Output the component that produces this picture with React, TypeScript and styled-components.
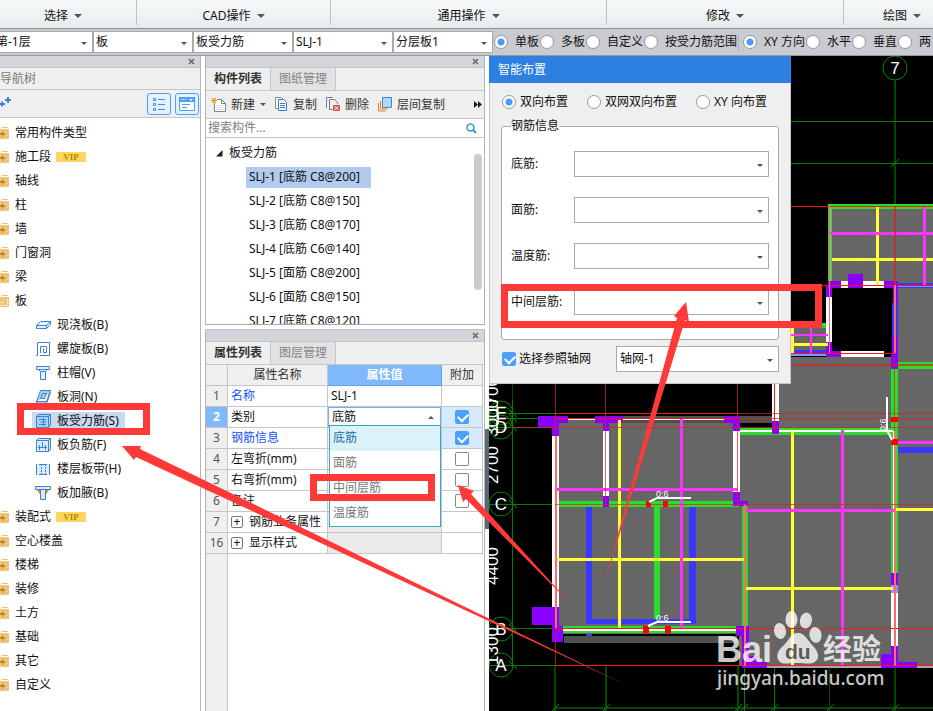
import React, { useState } from 'react';
import styled, { createGlobalStyle, css } from 'styled-components';

const GlobalStyle = createGlobalStyle`
  * { box-sizing: border-box; }
  body {
    margin: 0;
    background: #fff;
    color: #111;
    font: 12px/16px "Noto Sans", "Noto Sans CJK SC", sans-serif;
  }
  button, input, select { font: inherit; color: inherit; margin: 0; }
  button { background: none; border: 0; padding: 0; }
`;

/* ---------- shared controls ---------- */

const Page = styled.div`
  position: relative;
  display: flex;
  flex-direction: column;
  height: 100vh;
  overflow: hidden;
`;

const Caret = styled.span<{ $up?: boolean }>`
  width: 0;
  height: 0;
  border-left: 3px solid transparent;
  border-right: 3px solid transparent;
  ${(p) => (p.$up ? 'border-bottom: 3px solid #555;' : 'border-top: 3px solid #555;')}
`;

const SelectBox = styled.span`
  position: relative;
  display: flex;
  height: 26px;
  &::after {
    content: '';
    position: absolute;
    right: 6px;
    top: 50%;
    border: 3px solid transparent;
    border-top-color: #555;
    border-bottom-width: 0;
    pointer-events: none;
  }
  select {
    width: 100%;
    appearance: none;
    border: 1px solid #aaa;
    border-radius: 0;
    background: #fff;
    padding: 0 16px 0 3px;
  }
`;

const RadioLabel = styled.label<{ $gap: number }>`
  display: flex;
  align-items: center;
  gap: ${(p) => p.$gap}px;
  white-space: nowrap;
  flex: none;
`;

const Radio = styled.input.attrs({ type: 'radio' })`
  appearance: none;
  flex: none;
  width: 14px;
  height: 14px;
  border: 1px solid #999;
  border-radius: 50%;
  background: #fff;
  &:checked { background: radial-gradient(circle, #4a9cf8 0 3px, #fff 4px); }
`;

const CheckInput = styled.input.attrs({ type: 'checkbox' })`
  appearance: none;
  flex: none;
  display: block;
  width: 14px;
  height: 14px;
  border: 1px solid #888;
  border-radius: 2px;
  background: #fff;
  &:checked {
    border-color: #4c9ffb;
    background: #4c9ffb;
  }
  &:checked::after {
    content: '';
    display: block;
    width: 8px;
    height: 5px;
    margin: 2px;
    border: solid #fff;
    border-width: 0 0 2px 2px;
    transform: rotate(-45deg);
  }
`;

/* ---------- ribbon ---------- */

const Ribbon = styled.nav`
  flex: none;
  display: grid;
  grid-template-columns: 137fr 194fr 276fr 237fr 89fr;
  height: 29px;
  background: linear-gradient(#f7f9f9, #e6eced);
  border-bottom: 1px solid #8f9296;
`;

const RibbonGroup = styled.div`
  display: flex;
  align-items: center;
  justify-content: center;
  padding-top: 6px;
  margin-bottom: 3px;
  border-right: 1px solid #bfc2c4;
  &:first-child { padding-right: 10px; }
  &:last-child { border: 0; justify-content: flex-start; padding-left: 39px; }
  button {
    display: flex;
    align-items: center;
    gap: 6px;
    white-space: nowrap;
  }
  ${Caret} { border-left-width: 4px; border-right-width: 4px; border-top-width: 4px; }
`;

const OptionBar = styled.div`
  flex: none;
  display: flex;
  align-items: center;
  height: 27px;
  overflow: hidden;
  background: #cacbd1;
  border-bottom: 1px solid #96989c;
  ${SelectBox} { flex: none; width: 100px; height: 22px; }
  ${SelectBox} select { padding-left: 2px; }
  ${SelectBox}:first-child { width: 93px; }
  ${SelectBox}:first-child select { padding-left: 0; text-indent: -4px; border-left: 0; }
`;

const RadioSet = styled.div`
  display: flex;
  gap: 1px;
  padding: 0 1px 0 1px;
  height: 17px;
  & + & { border-left: 1px solid #b0b2b6; padding-left: 4px; }
`;

/* ---------- workspace ---------- */

const Workspace = styled.main`
  flex: 1;
  min-height: 0;
  display: grid;
  grid-template-columns: 201px 280px 1fr;
  column-gap: 4px;
`;

const Panel = styled.section`
  display: flex;
  flex-direction: column;
  min-height: 0;
  border-right: 1px solid #b4b5ba;
  background: #fff;
`;

const PanelStrip = styled.div`
  flex: none;
  display: flex;
  align-items: center;
  justify-content: flex-end;
  height: 12px;
  padding-right: 5px;
  background: #d4d5db;
  border-bottom: 1px solid #c2c3c8;
  button { display: flex; }
`;

const PanelTitle = styled.h2`
  flex: none;
  margin: 0;
  height: 22px;
  padding: 3px 0;
  font-size: 12px;
  line-height: 16px;
  font-weight: 400;
  color: #7a7a7a;
  background: #efefef;
  border-bottom: 1px solid #c6c6c6;
`;

const NavTools = styled.div`
  flex: none;
  display: flex;
  align-items: center;
  gap: 4px;
  height: 28px;
  padding-right: 1px;
  background: #efefef;
  border-bottom: 1px solid #c6c6c6;
  & > :first-child { margin-right: auto; }
`;

const ToggleButton = styled.button`
  display: flex;
  align-items: center;
  justify-content: center;
  width: 24px;
  height: 22px;
  border: 1px solid #4c9ffb;
  border-radius: 3px;
  background: #e5f1fe;
`;

const List = styled.ul`
  list-style: none;
  margin: 0;
  padding: 3px 0 0;
`;

const NavItem = styled.li`
  display: flex;
  align-items: center;
  height: 24px;
  gap: 5px;
  button { display: flex; align-items: center; gap: 6px; white-space: nowrap; }
`;

const NavChild = styled.li<{ $active?: boolean }>`
  display: flex;
  align-items: center;
  height: 24px;
  padding-left: 32px;
  button {
    display: flex;
    align-items: center;
    gap: 6px;
    height: 18px;
    padding: 0 6px 0 3px;
    white-space: nowrap;
    background: ${(p) => (p.$active ? '#c8d9f0' : 'transparent')};
  }
`;

const Vip = styled.span`
  width: 30px;
  height: 10px;
  background: #ffd65c;
  color: #b8860b;
  font: bold 9px/10px "Liberation Serif", serif;
  text-align: center;
`;

const Middle = styled.div`
  display: flex;
  flex-direction: column;
  gap: 4px;
  min-height: 0;
  ${Panel} { border-left: 1px solid #b4b5ba; }
`;

const ComponentPanel = styled(Panel)`
  flex: 0 0 269px;
  border-bottom: 1px solid #aaa;
`;

const PropertyPanel = styled(Panel)`
  flex: 1;
  border-top: 1px solid #c2c3c8;
`;

const Tabs = styled.div`
  flex: none;
  display: flex;
  height: 23px;
  background: #efefef;
  border-bottom: 1px solid #c6c6c6;
`;

const Tab = styled.button<{ $active?: boolean }>`
  width: 65px;
  color: #858585;
  background: #e2e2e2;
  border-right: 1px solid #c6c6c6;
  ${(p) => p.$active && css`
    color: #333;
    font-weight: 700;
    background: #efefef;
  `}
`;

const Tools = styled.div`
  flex: none;
  display: flex;
  align-items: center;
  height: 28px;
  padding: 0 2px 0 5px;
  background: #efefef;
  border-bottom: 1px solid #c6c6c6;
  color: #333;
  gap: 9px;
  button { display: flex; align-items: center; gap: 5px; white-space: nowrap; }
  & > :last-child { margin-left: auto; }
`;

const Search = styled.label`
  flex: none;
  display: flex;
  align-items: center;
  height: 19px;
  padding-right: 7px;
  border-bottom: 1px solid #c6c6c6;
  input {
    flex: 1;
    min-width: 0;
    border: 0;
    padding: 0 2px;
    outline: 0;
  }
  input::placeholder { color: #808080; opacity: 1; }
`;

const ComponentTree = styled.div`
  position: relative;
  flex: 1;
  min-height: 0;
  overflow: hidden;
`;

const TreeRoot = styled.button`
  display: flex;
  align-items: center;
  gap: 6px;
  height: 24px;
  padding-left: 10px;
`;

const TreeItem = styled.li<{ $active?: boolean }>`
  display: flex;
  align-items: center;
  height: 24px;
  padding-left: 40px;
  button {
    height: 21px;
    min-width: 125px;
    padding: 0 3px;
    text-align: left;
    white-space: nowrap;
    background: ${(p) => (p.$active ? '#b1cbee' : 'transparent')};
  }
`;

const ScrollThumb = styled.div`
  position: absolute;
  top: 16px;
  right: 2px;
  width: 8px;
  height: 136px;
  border-radius: 4px;
  background: #ccc;
`;

/* ---------- property table ---------- */

const TableArea = styled.div`
  flex: 1;
  background: linear-gradient(to right, #efefef 21px, #c6c6c6 21px 22px, #fff 22px);
`;

const PropTable = styled.table`
  width: 277px;
  table-layout: fixed;
  border-collapse: separate;
  border-spacing: 0;
  th, td {
    height: 21px;
    padding: 0 3px;
    border: solid #c6c6c6;
    border-width: 0 1px 1px 0;
    font-weight: 400;
    text-align: left;
    white-space: nowrap;
    background: #fff;
  }
  thead th { background: #efefef; text-align: center; color: #333; }
`;

const ValueHead = styled.th`
  && {
    background: #80b9fb;
    color: #fff;
    font-weight: 700;
    border-color: #60a4ee;
  }
`;

const RowHead = styled.th<{ $active?: boolean }>`
  && {
    padding: 0;
    text-align: center;
    color: #555;
    background: #efefef;
    ${(p) => p.$active && css`
      background: #80b9fb;
      color: #fff;
      font-weight: 700;
    `}
  }
`;

const NameCell = styled.td<{ $blue?: boolean }>`
  color: ${(p) => (p.$blue ? '#1552f5' : '#111')};
`;

const ValueCell = styled.td<{ $empty?: boolean }>`
  && { ${(p) => p.$empty && 'background: #ebebeb;'} }
`;

const ExtraCell = styled.td<{ $active?: boolean }>`
  && {
    padding: 0 13px;
    ${(p) => p.$active && 'background: #d6e9fd;'}
  }
`;

const Expander = styled.button`
  display: inline-flex;
  align-items: center;
  justify-content: center;
  width: 12px;
  height: 12px;
  margin-right: 6px;
  border: 1px solid #777;
  border-radius: 2px;
  line-height: 10px;
`;

const Combo = styled.div`
  position: relative;
  margin: 0 -3px;
`;

const ComboButton = styled.button`
  display: flex;
  align-items: center;
  justify-content: space-between;
  width: 100%;
  height: 20px;
  padding: 0 6px 0 3px;
  border: 1px solid #6fb0f5;
`;

const Options = styled.ul`
  position: absolute;
  top: 18px;
  left: 1px;
  right: 0;
  z-index: 2;
  margin: 0;
  padding: 0;
  list-style: none;
  background: #fff;
  border: 1px solid #35a6cc;
`;

const Option = styled.li<{ $active?: boolean }>`
  height: 25px;
  padding: 4px 3px;
  line-height: 16px;
  color: ${(p) => (p.$active ? '#1a6fa8' : '#777')};
  background: ${(p) => (p.$active ? '#daf2fa' : '#fff')};
`;

/* ---------- drawing area and dialog ---------- */

const Viewport = styled.div`
  position: relative;
  min-width: 0;
  overflow: hidden;
  background: #000;
  & > svg { display: block; }
`;

const Dialog = styled.form`
  position: absolute;
  top: 0;
  left: 0;
  width: 302px;
  background: #efefef;
  border: solid #bcc6d4;
  border-width: 0 1px 1px 1px;
`;

const DialogTitle = styled.h2`
  margin: 0 -1px;
  padding: 6px 9px 5px;
  font-size: 12px;
  line-height: 16px;
  font-weight: 400;
  color: #fff;
  background: #2d7fe1;
`;

const DialogModes = styled.div`
  display: flex;
  gap: 19px;
  padding: 11px 12px 9px;
`;

const Rebar = styled.fieldset`
  display: flex;
  flex-direction: column;
  gap: 20px;
  margin: 0 11px;
  padding: 18px 9px 24px;
  border: 1px solid #aaa;
  border-radius: 3px;
  background: #fff;
  legend { padding: 0; line-height: 14px; height: 14px; }
`;

const RebarRow = styled.label`
  display: grid;
  grid-template-columns: 63px 1fr;
  align-items: center;
`;

const DialogFoot = styled.div`
  display: flex;
  align-items: center;
  justify-content: space-between;
  padding: 6px 11px 11px 12px;
  label { display: flex; align-items: center; gap: 3px; }
  ${SelectBox} { width: 163px; }
`;

const Markup = styled.svg`
  position: absolute;
  inset: 0;
  pointer-events: none;
  z-index: 5;
`;

const Splitter = styled.div`
  position: absolute;
  left: 485px;
  top: 429px;
  width: 4px;
  height: 100px;
  background: #5d6673;
`;

/* ---------- icons ---------- */

const CloseIcon = () => (
  <svg width="7" height="7" viewBox="0 0 7 7" stroke="#666" strokeWidth="1.5"><path d="M1 1l5 5M6 1L1 6" /></svg>
);

const FolderIcon = ({ open }: { open?: boolean }) => (
  <svg width="9" height="14" viewBox="0 0 9 14" shapeRendering="crispEdges">
    <path d="M2 1h6v1H2zM0 3h9v10H0z" fill="#eec47c" />
    {open ? (
      <path d="M7 5v6H0v1h8V5zM0 8h4v1H0z" fill="#fbe9c8" />
    ) : (
      <path d="M0 7h5v2H0zM2 5h1v6H2z" fill="#c4861c" />
    )}
  </svg>
);

const nodeIcons: Record<string, React.ReactNode> = {
  slab: <path d="M1.500 8.500l4-4h10l-4 4zM1.500 8.500v3h10l4-4v-3M11.500 8.500v3" fill="#e3effc" />,
  spiral: <path d="M1 14.500h1.500v-13h12v13H5M5.500 12V5.500h6v6h-3v-4" fill="none" />,
  cap: <path d="M1.500 1.500h13v3h-13zM3.500 4.500l2 2h5l2-2M5.500 6.500v8h5v-8" fill="#e3effc" />,
  hole: <path d="M5.500 1.500h10l-4 11h-10zM7.500 4.500h4l-2 5h-4zM1.500 12.500v2h10l4-11" fill="#a9ccf3" />,
  force: <><path d="M1.500 3.500l2-2h12v11l-2 2h-12zM1.500 3.500h12v11M13.500 3.500l2-2" fill="#a9d0fa" /><path d="M4 6.500h7M4 11.500h7M5.500 9h6M8.500 5v8" fill="none" /></>,
  negative: <><path d="M1.500 3.500l2-2h12v11l-2 2h-12zM1.500 3.500h12v11M13.500 3.500l2-2" fill="#dcebfc" /><path d="M3 10.500h9M4.500 8v5M7.500 5v6M10.500 8v5" fill="none" /></>,
  strip: <><path d="M1 3h14v11H1z" fill="#dcebfc" stroke="none" /><path d="M1.500 3v11M14.500 3v11M4 3.500h8M4 13.500h8" fill="none" /><path d="M6.500 3v11M10.500 3v11" fill="none" strokeDasharray="2 1" /></>,
  haunch: <><path d="M2 5h12l-4 6H6z" fill="#f58220" stroke="none" /><path d="M.5 1.500h15v3H.5zM5.500 5v9.500h5V5" fill="#dcebfc" /></>,
};

const NodeIcon = ({ kind }: { kind: string }) => (
  <svg width="16" height="16" viewBox="0 0 16 16" stroke="#3e82cc">{nodeIcons[kind]}</svg>
);

const NewIcon = () => (
  <svg width="15" height="16" viewBox="0 0 15 16">
    <path d="M3.500 2.500h7l4 4v8h-11z" fill="#fff" stroke="#7d8893" />
    <path d="M10.500 2.500v4h4" fill="none" stroke="#7d8893" />
    <path d="M5 8.500h7M5 10.500h7M5 12.500h7" stroke="#ddd" />
    <path d="M0 1h6v5H0z" fill="#fff" />
    <path d="M0 3.500h6M3 1v5M1 1l4 5M5 1L1 6" stroke="#f08a1c" />
  </svg>
);

const CopyIcon = () => (
  <svg width="13" height="15" viewBox="0 0 13 15" fill="#fff">
    <path d="M.5 .5h6l2 2v9h-8z" stroke="#8295a8" />
    <path d="M3.500 2.500h5l3 3v8h-8z" stroke="#2f7dcc" />
    <path d="M5 6.500h5M5 8.500h5M5 10.500h5" stroke="#2f7dcc" />
  </svg>
);

const DeleteIcon = () => (
  <svg width="14" height="15" viewBox="0 0 14 15" fill="none">
    <path d="M.5 11V.5h6M3.500 13V2.500h5l3 3v2M3.500 12.500h3" stroke="#73808c" />
    <path d="M7 8h7v6H7z" fill="#d9534f" />
    <path d="M8.500 9l4 4M12.500 9l-4 4" stroke="#fff" />
  </svg>
);

const LayerIcon = () => (
  <svg width="14" height="15" viewBox="0 0 14 15" fill="none">
    <path d="M.5 6v8h7M2.500 4v8h7" stroke="#e8822b" />
    <path d="M4.500 .5h9v10h-9z" fill="#b4d6fb" stroke="#3f86d4" />
  </svg>
);

/* ---------- data ---------- */

const ribbonGroups = ['选择', 'CAD操作', '通用操作', '修改', '绘图'];
const filters = [['楼层', '第-1层'], ['类型', '板'], ['构件', '板受力筋'], ['名称', 'SLJ-1'], ['分层', '分层板1']];
const upperNav = ['常用构件类型', '施工段', '轴线', '柱', '墙', '门窗洞', '梁', '板'];
const lowerNav = ['装配式', '空心楼盖', '楼梯', '装修', '土方', '基础', '其它', '自定义'];
const slabNodes = [
  ['slab', '现浇板(B)'], ['spiral', '螺旋板(B)'], ['cap', '柱帽(V)'], ['hole', '板洞(N)'],
  ['force', '板受力筋(S)'], ['negative', '板负筋(F)'], ['strip', '楼层板带(H)'], ['haunch', '板加腋(B)'],
];
const components = [
  'SLJ-1 [底筋 C8@200]', 'SLJ-2 [底筋 C8@150]', 'SLJ-3 [底筋 C8@170]', 'SLJ-4 [底筋 C6@140]',
  'SLJ-5 [面筋 C8@200]', 'SLJ-6 [面筋 C8@150]', 'SLJ-7 [底筋 C8@120]',
];
const categories = ['底筋', '面筋', '中间层筋', '温度筋'];
const properties = [
  { no: 1, name: '名称', blue: true },
  { no: 2, name: '类别', extra: true, checked: true },
  { no: 3, name: '钢筋信息', blue: true, extra: true, checked: true },
  { no: 4, name: '左弯折(mm)', extra: true },
  { no: 5, name: '右弯折(mm)', extra: true },
  { no: 6, name: '备注', extra: true },
  { no: 7, name: '钢筋业务属性', group: true },
  { no: 16, name: '显示样式', group: true },
];

/* ---------- plan drawing ---------- */

type Box = [number, number, number, number];
const Boxes = ({ fill, items }: { fill: string; items: Box[] }) => (
  <g fill={fill}>
    {items.map(([x1, y1, x2, y2], i) => (
      <rect key={i} x={x1} y={y1} width={x2 - x1} height={y2 - y1} />
    ))}
  </g>
);

const GREEN = '#2bdc2b';
const PURPLE = '#8a00ff';
const YELLOW = '#ffff33';
const MAGENTA = '#ff33ff';
const BLUE = '#3838ff';

const PlanDrawing = () => (
  <svg width="444" height="655" viewBox="489 56 444 655" shapeRendering="crispEdges">
    <Boxes fill="#666" items={[[555, 418, 739, 634], [739, 430, 933, 665], [772, 357, 933, 430], [828, 205, 933, 285], [791, 326, 828, 354], [897, 285, 933, 357]]} />
    <Boxes fill="#505050" items={[[621, 416, 740, 423], [740, 416, 772, 423], [564, 636, 737, 643]]} />
    <Boxes fill="#000" items={[[740, 423, 772, 427], [832, 288, 893, 351]]} />
    <Boxes fill="#004a00" items={[
      [894, 80, 896, 206], [554, 665, 556, 711], [605, 665, 607, 711], [737, 665, 739, 711],
      [894, 665, 896, 711], [829, 665, 830, 711], [512, 384, 513, 666], [555, 707, 933, 709],
    ]} />
    <Boxes fill="#008000" items={[
      [791, 121, 933, 122], [791, 163, 933, 164], [489, 413, 555, 414], [489, 418, 540, 419],
      [489, 427, 555, 428], [489, 504, 555, 505], [489, 628, 555, 629], [489, 665, 555, 666],
      [744, 665, 745, 711], [774, 665, 775, 711], [512, 400, 513, 666],
    ]} />
    <Boxes fill={GREEN} items={[
      [557, 501, 739, 507], [563, 626, 737, 633], [654, 507, 660, 623], [740, 428, 893, 435],
      [742, 506, 748, 626], [891, 369, 898, 573], [898, 362, 933, 369], [828, 204, 832, 285],
      [828, 204, 933, 209], [822, 323, 827, 328],
    ]} />
    <Boxes fill={BLUE} items={[
      [586, 507, 592, 624], [689, 507, 696, 624], [586, 619, 696, 624], [586, 634, 592, 636],
      [898, 447, 933, 453], [897, 283, 933, 288], [791, 350, 828, 354], [892, 303, 898, 336],
    ]} />
    <Boxes fill="#fff" items={[
      [552, 436, 559, 608], [603, 431, 609, 496], [733, 431, 740, 492], [772, 384, 779, 421],
      [740, 430, 893, 432], [555, 629, 737, 631], [555, 419, 739, 420], [891, 593, 898, 646],
      [841, 281, 884, 288], [826, 297, 832, 342], [841, 351, 884, 357], [893, 431, 894, 585],
    ]} />
    <Boxes fill="#aaa" items={[[749, 665, 933, 668], [832, 206, 933, 207], [830, 207, 831, 285]]} />
    <Boxes fill="#8f8ff5" items={[[891, 585, 898, 593], [897, 285, 933, 287], [791, 354, 828, 356]]} />
    <Boxes fill={PURPLE} items={[
      [538, 416, 555, 427], [552, 416, 568, 423], [552, 423, 559, 436], [595, 416, 623, 423],
      [603, 423, 609, 431], [603, 496, 609, 507], [532, 607, 559, 625], [552, 607, 559, 642],
      [552, 626, 563, 642], [724, 416, 740, 423], [733, 423, 740, 431], [733, 492, 740, 506],
      [733, 501, 748, 506], [736, 626, 749, 636], [742, 636, 749, 668], [742, 656, 758, 668],
      [742, 662, 767, 668], [772, 421, 779, 434], [891, 355, 898, 369], [891, 573, 898, 585],
      [891, 646, 898, 665], [881, 654, 898, 668], [898, 662, 917, 668], [848, 274, 863, 288],
      [828, 281, 841, 288], [826, 285, 832, 297], [826, 342, 832, 357], [826, 351, 841, 357],
      [884, 281, 897, 288], [893, 281, 898, 303], [892, 336, 898, 369],
    ]} />
    <Boxes fill={YELLOW} items={[
      [618, 420, 621, 628], [555, 558, 744, 561], [791, 431, 794, 665], [746, 587, 893, 590],
      [895, 508, 933, 511], [876, 207, 879, 285], [832, 258, 933, 261], [791, 326, 794, 353],
      [791, 343, 828, 346],
    ]} />
    <Boxes fill={MAGENTA} items={[
      [680, 419, 683, 629], [555, 488, 737, 491], [841, 430, 844, 666], [745, 509, 895, 512],
      [898, 441, 933, 444], [923, 206, 926, 286], [830, 232, 933, 235], [810, 326, 812, 353],
      [791, 334, 828, 336],
    ]} />
    <Boxes fill="#f01818" items={[
      [791, 206, 933, 207], [791, 285, 933, 286], [791, 353, 895, 354], [555, 665, 933, 666],
      [555, 628, 933, 629], [555, 413, 740, 414], [555, 418, 740, 419], [774, 384, 775, 431],
    ]} />
    <Boxes fill="#ff6a6a" items={[
      [829, 206, 830, 353], [894, 285, 896, 353], [744, 504, 746, 666], [555, 436, 557, 628], [894, 431, 896, 666],
    ]} />
    <g opacity="0.7">
      <Boxes fill="#e02020" items={[
        [791, 364, 933, 366], [740, 413, 933, 414], [740, 418, 933, 419], [513, 427, 933, 428],
        [555, 504, 933, 505], [555, 384, 556, 436], [555, 628, 556, 666], [605, 384, 606, 505], [737, 384, 738, 504],
        [894, 206, 896, 285], [894, 357, 895, 431],
      ]} />
    </g>
    <Boxes fill="#f00" items={[
      [646, 501, 651, 507], [663, 501, 668, 507], [643, 626, 649, 633], [665, 626, 671, 633],
      [891, 417, 898, 422], [891, 439, 898, 445],
    ]} />
    <g stroke="#008a00" fill="none" shapeRendering="auto">
      {[[895, 68], [501, 504], [501, 629], [501, 665], [501, 413], [501, 418], [501, 427]].map(([x, y]) => (
        <circle key={y} cx={x} cy={y} r="12" />
      ))}
      {[[555, 708], [606, 708], [738, 708], [744, 708], [774, 708], [830, 708], [895, 708], [895, 163]].map(([x, y]) => (
        <path key={x + y} d={`M${x - 4} ${y + 4}l8-8`} />
      ))}
      {[413, 418, 427, 504, 628, 665].map((y) => (
        <path key={y} d={`M509 ${y - 4}l8 8`} />
      ))}
    </g>
    <g stroke="#fff" strokeWidth="2" fill="none" shapeRendering="auto">
      <path d="M649 502L657 498H691M648 626L657 622H691M887 397V430L892 440" />
    </g>
    <g fill="#fff" fontFamily="Liberation Sans, sans-serif" fontSize="9">
      <text x="656" y="497">0:6</text>
      <text x="656" y="621">0:6</text>
      <text transform="translate(886 431) rotate(-90)">0:6</text>
    </g>
    <g fill="#fff" fontFamily="Liberation Sans, sans-serif" fontSize="17" textAnchor="middle">
      <text x="895" y="74">7</text>
      <text x="501" y="510">C</text>
      <text x="501" y="635">B</text>
      <text x="501" y="671">A</text>
      <text x="501" y="419">E</text>
      <text x="501" y="424">F</text>
      <text x="501" y="433">D</text>
      <text transform="translate(498 465) rotate(-90)">2700</text>
      <text transform="translate(498 566) rotate(-90)">4400</text>
      <text transform="translate(498 646) rotate(-90)">1300</text>
      <text transform="translate(498 418) rotate(-90)">3000</text>
      <text transform="translate(498 396) rotate(-90)">1700</text>
    </g>
    <g fill="#fff" opacity="0.78" shapeRendering="auto">
      <text x="716" y="662" fontFamily="Liberation Sans, sans-serif" fontWeight="700" fontSize="36">Bai</text>
      <ellipse cx="780" cy="631" rx="6" ry="8" transform="rotate(-10 780 631)" />
      <ellipse cx="791.500" cy="619.500" rx="6" ry="8.500" />
      <ellipse cx="806" cy="620.500" rx="6" ry="8" transform="rotate(12 806 620)" />
      <ellipse cx="815.500" cy="635" rx="6" ry="8" transform="rotate(-10 815 635)" />
      <path d="M798 633c-8 0-9 8-15 13s-7 11-4 15 9 2 18 2 15 2 19-2 2-10-3-15-8-13-15-13z" />
      <text x="785" y="659" fill="#555" fontFamily="Liberation Sans, sans-serif" fontWeight="700" fontSize="21">du</text>
      <text x="823" y="660" fontFamily="Noto Sans CJK SC, sans-serif" fontWeight="700" fontSize="29">经验</text>
      <text x="717" y="685" fontFamily="Noto Sans, sans-serif" fontWeight="500" fontSize="19">jingyan.baidu.com</text>
    </g>
  </svg>
);

/* ---------- page ---------- */

const Dropdown = ({ label, value }: { label?: string; value: string }) => (
  <SelectBox>
    <select aria-label={label}><option>{value}</option></select>
  </SelectBox>
);

const NavGroup = ({ name }: { name: string }) => (
  <NavItem>
    <button><FolderIcon open={name === '板'} /><span>{name}</span></button>
    {(name === '施工段' || name === '装配式') && <Vip>VIP</Vip>}
  </NavItem>
);

const RadioRow = ({ name, items, gap }: { name: string; items: string[]; gap: number }) => (
  <>
    {items.map((text, i) => (
      <RadioLabel key={text} $gap={gap}>
        <Radio name={name} defaultChecked={i === 0} />{text}
      </RadioLabel>
    ))}
  </>
);

export default function App() {
  const [category, setCategory] = useState('底筋');
  const [open, setOpen] = useState(true);

  return (
    <Page>
      <GlobalStyle />
      <Ribbon>
        {ribbonGroups.map((g) => (
          <RibbonGroup key={g}><button>{g}<Caret /></button></RibbonGroup>
        ))}
      </Ribbon>
      <OptionBar>
        {filters.map(([label, value]) => <Dropdown key={label} label={label} value={value} />)}
        <RadioSet><RadioRow name="scope" gap={7} items={['单板', '多板', '自定义', '按受力筋范围']} /></RadioSet>
        <RadioSet><RadioRow name="direction" gap={7} items={['XY 方向', '水平', '垂直', '两']} /></RadioSet>
      </OptionBar>

      <Workspace>
        <Panel>
          <PanelStrip><button aria-label="关闭"><CloseIcon /></button></PanelStrip>
          <PanelTitle>导航树</PanelTitle>
          <NavTools>
            <button aria-label="添加">
              <svg width="12" height="12" viewBox="0 0 12 12" stroke="#3d85d8" strokeWidth="2"><path d="M0 8h5M2 5.500v5M5 4h6M8 1v6" /></svg>
            </button>
            <ToggleButton aria-label="列表">
              <svg width="14" height="14" viewBox="0 0 14 14" stroke="#3d8fe8" fill="none"><path d="M1.500 1.500h2v2h-2zM1.500 6.500h2v2h-2zM1.500 11.500h2v2h-2zM6 2.500h7M6 7.500h7M6 12.500h7" /></svg>
            </ToggleButton>
            <ToggleButton aria-label="窗口">
              <svg width="16" height="14" viewBox="0 0 16 14"><path d="M.5 .5h15v13H.5z" fill="#fff" stroke="#4c9ffb" /><path d="M0 0h16v5H0z" fill="#4c9ffb" /><path d="M2 2.500h5" stroke="#fff" strokeDasharray="1 1" /><path d="M10 2h4l-2 2z" fill="#fff" /><path d="M3 7.500h8M3 10.500h5" stroke="#4c9ffb" /></svg>
            </ToggleButton>
          </NavTools>
          <List>
            {upperNav.map((n) => <NavGroup key={n} name={n} />)}
            {slabNodes.map(([kind, name]) => (
              <NavChild key={kind} $active={kind === 'force'}>
                <button><NodeIcon kind={kind} />{name}</button>
              </NavChild>
            ))}
            {lowerNav.map((n) => <NavGroup key={n} name={n} />)}
          </List>
        </Panel>

        <Middle>
          <ComponentPanel>
            <PanelStrip><button aria-label="关闭"><CloseIcon /></button></PanelStrip>
            <Tabs><Tab $active>构件列表</Tab><Tab>图纸管理</Tab></Tabs>
            <Tools>
              <button><NewIcon />新建<Caret /></button>
              <button><CopyIcon />复制</button>
              <button><DeleteIcon />删除</button>
              <button><LayerIcon />层间复制</button>
              <button aria-label="更多">
                <svg width="8" height="7" viewBox="0 0 8 7" fill="#222"><path d="M0 0l4 3.500L0 7zM4 0l4 3.500L4 7z" /></svg>
              </button>
            </Tools>
            <Search>
              <input aria-label="搜索构件" placeholder="搜索构件..." />
              <svg width="11" height="11" viewBox="0 0 11 11" fill="none" stroke="#3a96cc" strokeWidth="1.500"><circle cx="4.500" cy="4.500" r="3.500" /><path d="M7 7l3 3" strokeWidth="2" /></svg>
            </Search>
            <ComponentTree>
              <List>
                <li>
                  <TreeRoot><svg width="7" height="7" viewBox="0 0 7 7"><path d="M6.500 0v6.500H0z" fill="#222" /></svg>板受力筋</TreeRoot>
                </li>
                {components.map((c, i) => (
                  <TreeItem key={c} $active={i === 0}><button>{c}</button></TreeItem>
                ))}
              </List>
              <ScrollThumb />
            </ComponentTree>
          </ComponentPanel>

          <PropertyPanel>
            <PanelStrip><button aria-label="关闭"><CloseIcon /></button></PanelStrip>
            <Tabs><Tab $active>属性列表</Tab><Tab>图层管理</Tab></Tabs>
            <TableArea>
              <PropTable>
                <colgroup><col width="22" /><col width="100" /><col width="114" /><col width="41" /></colgroup>
                <thead>
                  <tr><th /><th>属性名称</th><ValueHead>属性值</ValueHead><th>附加</th></tr>
                </thead>
                <tbody>
                  {properties.map((p) => (
                    <tr key={p.no}>
                      <RowHead scope="row" $active={p.no === 2}>{p.no}</RowHead>
                      <NameCell $blue={p.blue}>
                        {p.group && <Expander aria-label={`展开${p.name}`}>+</Expander>}{p.name}
                      </NameCell>
                      <ValueCell $empty={p.group}>
                        {p.no === 1 && 'SLJ-1'}
                        {p.no === 2 && (
                          <Combo>
                            <ComboButton aria-haspopup="listbox" aria-expanded={open} onClick={() => setOpen(!open)}>
                              {category}<Caret $up />
                            </ComboButton>
                            {open && (
                              <Options role="listbox" aria-label="类别">
                                {categories.map((c) => (
                                  <Option
                                    key={c}
                                    role="option"
                                    aria-selected={c === category}
                                    $active={c === category}
                                    onClick={() => { setCategory(c); setOpen(false); }}
                                  >
                                    {c}
                                  </Option>
                                ))}
                              </Options>
                            )}
                          </Combo>
                        )}
                      </ValueCell>
                      <ExtraCell $active={p.checked}>
                        {p.extra && <CheckInput aria-label={`附加${p.name}`} defaultChecked={p.checked} />}
                      </ExtraCell>
                    </tr>
                  ))}
                </tbody>
              </PropTable>
            </TableArea>
          </PropertyPanel>
        </Middle>

        <Viewport>
          <PlanDrawing />
          <Dialog>
            <DialogTitle>智能布置</DialogTitle>
            <DialogModes><RadioRow name="mode" gap={4} items={['双向布置', '双网双向布置', 'XY 向布置']} /></DialogModes>
            <Rebar>
              <legend>钢筋信息</legend>
              {['底筋:', '面筋:', '温度筋:', '中间层筋:'].map((l) => (
                <RebarRow key={l}>{l}<Dropdown value="" /></RebarRow>
              ))}
            </Rebar>
            <DialogFoot>
              <label><CheckInput defaultChecked />选择参照轴网</label>
              <Dropdown label="轴网" value="轴网-1" />
            </DialogFoot>
          </Dialog>
        </Viewport>
      </Workspace>

      <Splitter />
      <Markup width="933" height="711" viewBox="0 0 933 711" aria-hidden="true">
        <g fill="none" stroke="#fd3a38" strokeWidth="7">
          <rect x="20.500" y="406.500" width="126" height="25" />
          <rect x="313.500" y="477.500" width="118" height="20" />
          <rect x="504.500" y="287.500" width="314" height="37" />
        </g>
        <g fill="#fd3a38">
          <path d="M122 446L141 446L140 449L626 685L136 457L134 460Z" />
          <path d="M458 485L474 491L471 494L572 605L466 499L463 502Z" />
          <path d="M686 302L689 322L685 320L604 585L677 318L674 316Z" />
        </g>
      </Markup>
    </Page>
  );
}
